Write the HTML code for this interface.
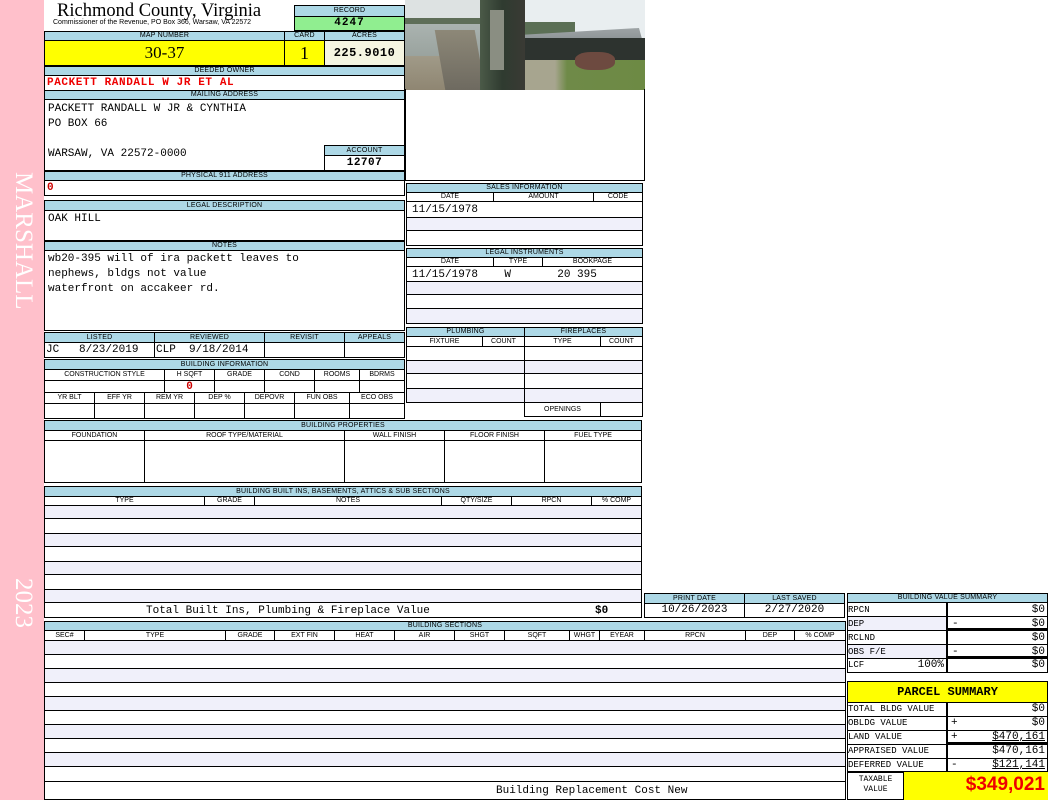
<!DOCTYPE html>
<html><head><meta charset="utf-8"><style>
body{margin:0;width:1050px;height:800px;background:#fff;position:relative;overflow:hidden;font-family:"Liberation Sans",sans-serif}
div{position:absolute;box-sizing:border-box}
.c{border:1px solid #000;overflow:hidden;white-space:nowrap}
.h{background:#add8e6;font-size:7px;text-align:center;line-height:8px;color:#000;letter-spacing:0.2px}
.m{font-family:"Liberation Mono",monospace;font-size:11px}
.sh{background:#f0f0fa}
.side{left:0;top:0;width:44px;height:800px;background:#ffc0cb}
.vt{color:#fff;font-family:"Liberation Serif",serif;font-size:25px;line-height:25px;transform:rotate(90deg);transform-origin:0 0;white-space:nowrap}
</style></head><body>
<div class="side"></div>
<div class="vt" style="left:36px;top:172px">MARSHALL</div>
<div class="vt" style="left:36px;top:578px">2023</div>

<!-- title -->
<div style="left:57px;top:1px;font-family:'Liberation Serif',serif;font-size:18.5px;line-height:20px">Richmond County, Virginia</div>
<div style="left:53px;top:19px;font-size:7px;line-height:8px">Commissioner of the Revenue, PO Box 366, Warsaw, VA 22572</div>
<div class="c h" style="left:294px;top:5px;width:111px;height:12px;line-height:10px">RECORD</div>
<div class="c m" style="left:294px;top:16px;width:111px;height:15px;background:#90ee90;text-align:center;font-weight:bold;line-height:13px;letter-spacing:1px">4247</div>

<div class="c h" style="left:44px;top:31px;width:241px;height:10px">MAP NUMBER</div>
<div class="c h" style="left:284px;top:31px;width:41px;height:10px">CARD</div>
<div class="c h" style="left:324px;top:31px;width:81px;height:10px">ACRES</div>
<div class="c" style="left:44px;top:40px;width:241px;height:26px;background:#ff0;text-align:center;font-family:'Liberation Serif',serif;font-size:17px;line-height:24px">30-37</div>
<div class="c" style="left:284px;top:40px;width:41px;height:26px;background:#ff0;text-align:center;font-family:'Liberation Serif',serif;font-size:18px;line-height:24px">1</div>
<div class="c m" style="left:324px;top:40px;width:81px;height:26px;background:#f5f5e1;text-align:center;font-weight:bold;line-height:24px;font-size:12px;letter-spacing:0.5px">225.9010</div>

<div class="c h" style="left:44px;top:66px;width:361px;height:10px">DEEDED OWNER</div>
<div class="c m" style="left:44px;top:75px;width:361px;height:16px;color:#e00;font-weight:bold;padding-left:2px;line-height:15px;letter-spacing:0.6px">PACKETT RANDALL W JR ET AL</div>
<div class="c h" style="left:44px;top:90px;width:361px;height:10px">MAILING ADDRESS</div>
<div class="c m" style="left:44px;top:99px;width:361px;height:72px;padding:2px 3px;line-height:15px;white-space:pre">PACKETT RANDALL W JR &amp; CYNTHIA
PO BOX 66

WARSAW, VA 22572-0000</div>
<div class="c h" style="left:324px;top:145px;width:81px;height:11px;line-height:9px">ACCOUNT</div>
<div class="c m" style="left:324px;top:155px;width:81px;height:16px;text-align:center;font-weight:bold;line-height:14px;letter-spacing:0.5px">12707</div>
<div class="c h" style="left:44px;top:171px;width:361px;height:10px">PHYSICAL 911 ADDRESS</div>
<div class="c m" style="left:44px;top:180px;width:361px;height:16px;color:#c00;font-weight:bold;padding-left:2px;line-height:15px">0</div>

<div class="c h" style="left:44px;top:200px;width:361px;height:11px;line-height:9px">LEGAL DESCRIPTION</div>
<div class="c m" style="left:44px;top:210px;width:361px;height:31px;padding:1px 3px;line-height:15px">OAK HILL</div>
<div class="c h" style="left:44px;top:241px;width:361px;height:10px">NOTES</div>
<div class="c m" style="left:44px;top:250px;width:361px;height:81px;padding:1px 3px;line-height:15px;white-space:pre">wb20-395 will of ira packett leaves to
nephews, bldgs not value
waterfront on accakeer rd.</div>

<!-- listed -->
<div class="c h" style="left:44px;top:332px;width:111px;height:11px;line-height:9px">LISTED</div>
<div class="c h" style="left:154px;top:332px;width:111px;height:11px;line-height:9px">REVIEWED</div>
<div class="c h" style="left:264px;top:332px;width:81px;height:11px;line-height:9px">REVISIT</div>
<div class="c h" style="left:344px;top:332px;width:61px;height:11px;line-height:9px">APPEALS</div>
<div class="c m" style="left:44px;top:342px;width:111px;height:16px;line-height:14px;padding-left:1px;white-space:pre">JC   8/23/2019</div>
<div class="c m" style="left:154px;top:342px;width:111px;height:16px;line-height:14px;padding-left:1px;white-space:pre">CLP  9/18/2014</div>
<div class="c" style="left:264px;top:342px;width:81px;height:16px"></div>
<div class="c" style="left:344px;top:342px;width:61px;height:16px"></div>

<div class="c h" style="left:44px;top:359px;width:361px;height:11px;line-height:9px">BUILDING INFORMATION</div>
<div class="c" style="left:44px;top:369px;width:121px;height:12px;font-size:7px;text-align:center;line-height:10px">CONSTRUCTION STYLE</div>
<div class="c" style="left:164px;top:369px;width:51px;height:12px;font-size:7px;text-align:center;line-height:10px">H SQFT</div>
<div class="c" style="left:214px;top:369px;width:51px;height:12px;font-size:7px;text-align:center;line-height:10px">GRADE</div>
<div class="c" style="left:264px;top:369px;width:51px;height:12px;font-size:7px;text-align:center;line-height:10px">COND</div>
<div class="c" style="left:314px;top:369px;width:46px;height:12px;font-size:7px;text-align:center;line-height:10px">ROOMS</div>
<div class="c" style="left:359px;top:369px;width:46px;height:12px;font-size:7px;text-align:center;line-height:10px">BDRMS</div>
<div class="c" style="left:44px;top:380px;width:121px;height:13px"></div>
<div class="c m" style="left:164px;top:380px;width:51px;height:13px;color:#c00;font-weight:bold;text-align:center;line-height:12px">0</div>
<div class="c" style="left:214px;top:380px;width:51px;height:13px"></div>
<div class="c" style="left:264px;top:380px;width:51px;height:13px"></div>
<div class="c" style="left:314px;top:380px;width:46px;height:13px"></div>
<div class="c" style="left:359px;top:380px;width:46px;height:13px"></div>
<div class="c" style="left:44px;top:392px;width:51px;height:12px;font-size:7px;text-align:center;line-height:10px">YR BLT</div>
<div class="c" style="left:94px;top:392px;width:51px;height:12px;font-size:7px;text-align:center;line-height:10px">EFF YR</div>
<div class="c" style="left:144px;top:392px;width:51px;height:12px;font-size:7px;text-align:center;line-height:10px">REM YR</div>
<div class="c" style="left:194px;top:392px;width:51px;height:12px;font-size:7px;text-align:center;line-height:10px">DEP %</div>
<div class="c" style="left:244px;top:392px;width:51px;height:12px;font-size:7px;text-align:center;line-height:10px">DEPOVR</div>
<div class="c" style="left:294px;top:392px;width:56px;height:12px;font-size:7px;text-align:center;line-height:10px">FUN OBS</div>
<div class="c" style="left:349px;top:392px;width:56px;height:12px;font-size:7px;text-align:center;line-height:10px">ECO OBS</div>
<div class="c" style="left:44px;top:403px;width:51px;height:16px"></div>
<div class="c" style="left:94px;top:403px;width:51px;height:16px"></div>
<div class="c" style="left:144px;top:403px;width:51px;height:16px"></div>
<div class="c" style="left:194px;top:403px;width:51px;height:16px"></div>
<div class="c" style="left:244px;top:403px;width:51px;height:16px"></div>
<div class="c" style="left:294px;top:403px;width:56px;height:16px"></div>
<div class="c" style="left:349px;top:403px;width:56px;height:16px"></div>

<!-- photos -->
<div style="left:405px;top:0;width:120px;height:90px;overflow:hidden;background:#dde2e2">
  <div style="left:0;top:18px;width:120px;height:6px;background:#5e6e58"></div>
  <div style="left:0;top:24px;width:120px;height:36px;background:linear-gradient(180deg,#aab3b0,#98a19c)"></div>
  <div style="left:0;top:56px;width:60px;height:34px;background:linear-gradient(180deg,#a09a88,#8f8672)"></div>
  <div style="left:35px;top:30px;width:40px;height:60px;background:linear-gradient(180deg,#8d8878,#6e6a60);transform:skewX(10deg)"></div>
  <div style="left:75px;top:0;width:45px;height:90px;background:linear-gradient(90deg,#4b5a48,#2f3b30 50%,#3a3a34)"></div>
  <div style="left:85px;top:10px;width:14px;height:60px;background:#8a8e82"></div>
</div>
<div style="left:525px;top:0;width:120px;height:90px;overflow:hidden;background:#e9eef0">
  <div style="left:0;top:22px;width:50px;height:14px;background:#5b6f55"></div>
  <div style="left:0;top:28px;width:120px;height:22px;background:linear-gradient(180deg,#9ea4a6,#7f8688);clip-path:polygon(0 30%,95% 0,100% 100%,0 100%)"></div>
  <div style="left:0;top:38px;width:120px;height:26px;background:#2d332f"></div>
  <div style="left:0;top:60px;width:120px;height:30px;background:linear-gradient(90deg,#a7a58f 0%,#a7a58f 25%,#6f8a48 35%,#6d8a44 100%)"></div>
  <div style="left:50px;top:52px;width:40px;height:18px;background:#6d4a40;border-radius:40%"></div>
</div>
<div class="c" style="left:405px;top:89px;width:240px;height:92px;border-top:none"></div>

<!-- sales -->
<div class="c h" style="left:406px;top:183px;width:237px;height:10px">SALES INFORMATION</div>
<div class="c" style="left:406px;top:192px;width:88px;height:10px;font-size:7px;text-align:center;line-height:8px">DATE</div>
<div class="c" style="left:493px;top:192px;width:101px;height:10px;font-size:7px;text-align:center;line-height:8px">AMOUNT</div>
<div class="c" style="left:593px;top:192px;width:50px;height:10px;font-size:7px;text-align:center;line-height:8px">CODE</div>
<div class="c" style="left:406px;top:201px;width:237px;height:45px"></div>
<div class="m" style="left:412px;top:203px;line-height:14px">11/15/1978</div>
<div class="sh" style="left:407px;top:217px;width:235px;height:14px;border-top:1px solid #000;border-bottom:1px solid #000"></div>

<div class="c h" style="left:406px;top:248px;width:237px;height:10px">LEGAL INSTRUMENTS</div>
<div class="c" style="left:406px;top:257px;width:88px;height:10px;font-size:7px;text-align:center;line-height:8px">DATE</div>
<div class="c" style="left:493px;top:257px;width:50px;height:10px;font-size:7px;text-align:center;line-height:8px">TYPE</div>
<div class="c" style="left:542px;top:257px;width:101px;height:10px;font-size:7px;text-align:center;line-height:8px">BOOKPAGE</div>
<div class="c" style="left:406px;top:266px;width:237px;height:58px"></div>
<div class="m" style="left:412px;top:268px;line-height:14px;white-space:pre">11/15/1978    W       20 395</div>
<div class="sh" style="left:407px;top:281px;width:235px;height:14px;border-top:1px solid #000;border-bottom:1px solid #000"></div>
<div class="sh" style="left:407px;top:308px;width:235px;height:15px;border-top:1px solid #000"></div>

<!-- plumbing/fireplaces -->
<div class="c h" style="left:406px;top:327px;width:119px;height:10px">PLUMBING</div>
<div class="c h" style="left:524px;top:327px;width:119px;height:10px">FIREPLACES</div>
<div class="c" style="left:406px;top:336px;width:77px;height:11px;font-size:7px;text-align:center;line-height:9px">FIXTURE</div>
<div class="c" style="left:482px;top:336px;width:43px;height:11px;font-size:7px;text-align:center;line-height:9px">COUNT</div>
<div class="c" style="left:524px;top:336px;width:77px;height:11px;font-size:7px;text-align:center;line-height:9px">TYPE</div>
<div class="c" style="left:600px;top:336px;width:43px;height:11px;font-size:7px;text-align:center;line-height:9px">COUNT</div>
<div class="c" style="left:406px;top:346px;width:119px;height:57px"></div>
<div class="c" style="left:524px;top:346px;width:119px;height:57px"></div>
<div class="sh" style="left:407px;top:360px;width:235px;height:14px;border-top:1px solid #000;border-bottom:1px solid #000"></div>
<div class="sh" style="left:407px;top:388px;width:235px;height:14px;border-top:1px solid #000"></div>
<div style="left:524px;top:346px;width:1px;height:57px;background:#000"></div>
<div class="c" style="left:524px;top:402px;width:77px;height:15px;font-size:7px;text-align:center;line-height:13px">OPENINGS</div>
<div class="c" style="left:600px;top:402px;width:43px;height:15px"></div>

<!-- building properties -->
<div class="c h" style="left:44px;top:420px;width:598px;height:11px;line-height:9px">BUILDING PROPERTIES</div>
<div class="c" style="left:44px;top:430px;width:101px;height:11px;font-size:7px;text-align:center;line-height:9px">FOUNDATION</div>
<div class="c" style="left:144px;top:430px;width:201px;height:11px;font-size:7px;text-align:center;line-height:9px">ROOF TYPE/MATERIAL</div>
<div class="c" style="left:344px;top:430px;width:101px;height:11px;font-size:7px;text-align:center;line-height:9px">WALL FINISH</div>
<div class="c" style="left:444px;top:430px;width:101px;height:11px;font-size:7px;text-align:center;line-height:9px">FLOOR FINISH</div>
<div class="c" style="left:544px;top:430px;width:98px;height:11px;font-size:7px;text-align:center;line-height:9px">FUEL TYPE</div>
<div class="c" style="left:44px;top:440px;width:101px;height:43px"></div>
<div class="c" style="left:144px;top:440px;width:201px;height:43px"></div>
<div class="c" style="left:344px;top:440px;width:101px;height:43px"></div>
<div class="c" style="left:444px;top:440px;width:101px;height:43px"></div>
<div class="c" style="left:544px;top:440px;width:98px;height:43px"></div>

<!-- built ins -->
<div class="c h" style="left:44px;top:486px;width:598px;height:11px;line-height:9px">BUILDING BUILT INS, BASEMENTS, ATTICS &amp; SUB SECTIONS</div>
<div class="c" style="left:44px;top:496px;width:161px;height:10px;font-size:7px;text-align:center;line-height:8px">TYPE</div>
<div class="c" style="left:204px;top:496px;width:51px;height:10px;font-size:7px;text-align:center;line-height:8px">GRADE</div>
<div class="c" style="left:254px;top:496px;width:188px;height:10px;font-size:7px;text-align:center;line-height:8px">NOTES</div>
<div class="c" style="left:441px;top:496px;width:71px;height:10px;font-size:7px;text-align:center;line-height:8px">QTY/SIZE</div>
<div class="c" style="left:511px;top:496px;width:81px;height:10px;font-size:7px;text-align:center;line-height:8px">RPCN</div>
<div class="c" style="left:591px;top:496px;width:51px;height:10px;font-size:7px;text-align:center;line-height:8px">% COMP</div>
<div class="c" style="left:44px;top:505px;width:598px;height:113px"></div>
<div class="sh" style="left:45px;top:506px;width:596px;height:13px;border-bottom:1px solid #000"></div>
<div class="sh" style="left:45px;top:533px;width:596px;height:14px;border-top:1px solid #000;border-bottom:1px solid #000"></div>
<div class="sh" style="left:45px;top:561px;width:596px;height:14px;border-top:1px solid #000;border-bottom:1px solid #000"></div>
<div class="sh" style="left:45px;top:589px;width:596px;height:14px;border-top:1px solid #000;border-bottom:1px solid #000"></div>
<div class="m" style="left:146px;top:604px;line-height:14px">Total Built Ins, Plumbing &amp; Fireplace Value</div>
<div class="m" style="left:595px;top:604px;line-height:14px;font-weight:bold">$0</div>

<div class="c h" style="left:644px;top:593px;width:101px;height:11px;line-height:9px">PRINT DATE</div>
<div class="c h" style="left:744px;top:593px;width:101px;height:11px;line-height:9px">LAST SAVED</div>
<div class="c m" style="left:644px;top:603px;width:101px;height:15px;text-align:center;line-height:13px">10/26/2023</div>
<div class="c m" style="left:744px;top:603px;width:101px;height:15px;text-align:center;line-height:13px">2/27/2020</div>

<!-- building sections -->
<div class="c h" style="left:44px;top:621px;width:802px;height:10px">BUILDING SECTIONS</div>
<div class="c" style="left:44px;top:630px;width:802px;height:170px"></div>
<div class="c" style="left:44px;top:630px;width:41px;height:11px;font-size:7px;text-align:center;line-height:9px">SEC#</div>
<div class="c" style="left:84px;top:630px;width:142px;height:11px;font-size:7px;text-align:center;line-height:9px">TYPE</div>
<div class="c" style="left:225px;top:630px;width:50px;height:11px;font-size:7px;text-align:center;line-height:9px">GRADE</div>
<div class="c" style="left:274px;top:630px;width:61px;height:11px;font-size:7px;text-align:center;line-height:9px">EXT FIN</div>
<div class="c" style="left:334px;top:630px;width:61px;height:11px;font-size:7px;text-align:center;line-height:9px">HEAT</div>
<div class="c" style="left:394px;top:630px;width:61px;height:11px;font-size:7px;text-align:center;line-height:9px">AIR</div>
<div class="c" style="left:454px;top:630px;width:51px;height:11px;font-size:7px;text-align:center;line-height:9px">SHGT</div>
<div class="c" style="left:504px;top:630px;width:66px;height:11px;font-size:7px;text-align:center;line-height:9px">SQFT</div>
<div class="c" style="left:569px;top:630px;width:31px;height:11px;font-size:7px;text-align:center;line-height:9px">WHGT</div>
<div class="c" style="left:599px;top:630px;width:46px;height:11px;font-size:7px;text-align:center;line-height:9px">EYEAR</div>
<div class="c" style="left:644px;top:630px;width:102px;height:11px;font-size:7px;text-align:center;line-height:9px">RPCN</div>
<div class="c" style="left:745px;top:630px;width:50px;height:11px;font-size:7px;text-align:center;line-height:9px">DEP</div>
<div class="c" style="left:794px;top:630px;width:52px;height:11px;font-size:7px;text-align:center;line-height:9px">% COMP</div>
<div class="sh" style="left:45px;top:641px;width:800px;height:14px;border-bottom:1px solid #000"></div>
<div class="sh" style="left:45px;top:668px;width:800px;height:15px;border-top:1px solid #000;border-bottom:1px solid #000"></div>
<div class="sh" style="left:45px;top:696px;width:800px;height:15px;border-top:1px solid #000;border-bottom:1px solid #000"></div>
<div class="sh" style="left:45px;top:724px;width:800px;height:15px;border-top:1px solid #000;border-bottom:1px solid #000"></div>
<div class="sh" style="left:45px;top:752px;width:800px;height:15px;border-top:1px solid #000;border-bottom:1px solid #000"></div>
<div style="left:45px;top:781px;width:800px;height:1px;background:#000"></div>
<div class="m" style="left:496px;top:784px;line-height:14px">Building Replacement Cost New</div>

<!-- building value summary -->
<div class="c h" style="left:847px;top:593px;width:201px;height:10px">BUILDING VALUE SUMMARY</div>
<div class="c" style="left:847px;top:602px;width:201px;height:71px"></div>
<div class="m" style="left:848px;top:603px;width:99px;height:14px;font-size:9px;line-height:14px;border-bottom:1px solid #000">RPCN</div>
<div class="m sh" style="left:848px;top:617px;width:99px;height:14px;font-size:9px;line-height:14px;border-bottom:1px solid #000">DEP</div>
<div class="m" style="left:848px;top:631px;width:99px;height:14px;font-size:9px;line-height:14px;border-bottom:1px solid #000">RCLND</div>
<div class="m sh" style="left:848px;top:645px;width:99px;height:14px;font-size:9px;line-height:14px;border-bottom:1px solid #000">OBS F/E</div>
<div class="m" style="left:848px;top:659px;width:99px;height:13px;font-size:9px;line-height:13px">LCF<span style="position:absolute;right:3px;font-size:11px">100%</span></div>
<div style="left:946px;top:602px;width:2px;height:71px;background:#000"></div>
<div class="m" style="left:948px;top:603px;width:99px;height:14px;line-height:14px;text-align:right;padding-right:2px;border-bottom:1px solid #000">$0</div>
<div class="m" style="left:948px;top:617px;width:99px;height:14px;line-height:14px;text-align:right;padding-right:2px;border-bottom:3px solid #000"><span style="position:absolute;left:4px">-</span>$0</div>
<div class="m" style="left:948px;top:631px;width:99px;height:14px;line-height:14px;text-align:right;padding-right:2px;border-bottom:1px solid #000">$0</div>
<div class="m" style="left:948px;top:645px;width:99px;height:14px;line-height:14px;text-align:right;padding-right:2px;border-bottom:3px solid #000"><span style="position:absolute;left:4px">-</span>$0</div>
<div class="m" style="left:948px;top:659px;width:99px;height:13px;line-height:13px;text-align:right;padding-right:2px">$0</div>

<!-- parcel summary -->
<div class="c" style="left:847px;top:681px;width:201px;height:22px;background:#ff0;text-align:center;font-family:'Liberation Mono',monospace;font-weight:bold;font-size:12px;line-height:20px">PARCEL SUMMARY</div>
<div class="c" style="left:847px;top:702px;width:201px;height:98px"></div>
<div class="m" style="left:848px;top:703px;width:99px;height:14px;font-size:9px;line-height:13px;border-bottom:1px solid #000">TOTAL BLDG VALUE</div>
<div class="m" style="left:848px;top:717px;width:99px;height:14px;font-size:9px;line-height:13px;border-bottom:1px solid #000">OBLDG VALUE</div>
<div class="m" style="left:848px;top:731px;width:99px;height:14px;font-size:9px;line-height:13px;border-bottom:1px solid #000">LAND VALUE</div>
<div class="m" style="left:848px;top:745px;width:99px;height:14px;font-size:9px;line-height:13px;border-bottom:1px solid #000">APPRAISED VALUE</div>
<div class="m" style="left:848px;top:759px;width:99px;height:13px;font-size:9px;line-height:13px">DEFERRED VALUE</div>
<div style="left:946px;top:702px;width:2px;height:70px;background:#000"></div>
<div class="m" style="left:948px;top:703px;width:99px;height:14px;line-height:13px;text-align:right;padding-right:2px;border-bottom:1px solid #000">$0</div>
<div class="m" style="left:948px;top:717px;width:99px;height:14px;line-height:13px;text-align:right;padding-right:2px;border-bottom:1px solid #000"><span style="position:absolute;left:3px">+</span>$0</div>
<div class="m" style="left:948px;top:731px;width:99px;height:14px;line-height:13px;text-align:right;padding-right:2px;border-bottom:3px solid #000"><span style="position:absolute;left:3px">+</span><u>$470,161</u></div>
<div class="m" style="left:948px;top:745px;width:99px;height:14px;line-height:13px;text-align:right;padding-right:2px;border-bottom:1px solid #000">$470,161</div>
<div class="m" style="left:948px;top:759px;width:99px;height:13px;line-height:13px;text-align:right;padding-right:2px"><span style="position:absolute;left:3px">-</span><u>$121,141</u></div>
<div style="left:847px;top:771px;width:201px;height:2px;background:#000"></div>
<div class="m" style="left:848px;top:773px;width:55px;height:27px;font-size:8px;line-height:10px;text-align:center;padding-top:2px">TAXABLE<br>VALUE</div>
<div style="left:903px;top:772px;width:145px;height:28px;background:#ff0;border-left:1px solid #000;color:#e00;font-weight:bold;font-size:19px;text-align:right;padding-right:3px;line-height:26px">$349,021</div>
</body></html>
